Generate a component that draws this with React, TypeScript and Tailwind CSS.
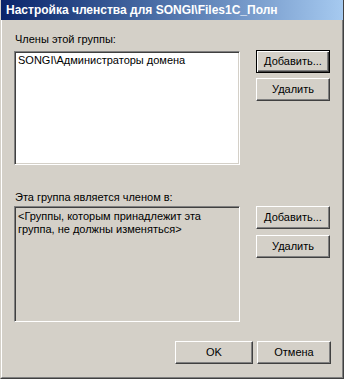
import React from 'react';

const font = { fontFamily: '"Liberation Sans", Arial, sans-serif' };

const Btn: React.FC<{ label: string; primary?: boolean; w?: string }> = ({ label, primary, w = 'w-[74px]' }) => (
  <button
    className={
      primary
        ? `${w} h-[23px] bg-[#d4d0c8] border border-black shadow-[inset_1px_1px_0_#ffffff,inset_-1px_-1px_0_#404040,inset_-2px_-2px_0_#808080] text-[11px] text-black leading-none`
        : `${w} h-[23px] bg-[#d4d0c8] border-t border-l border-t-white border-l-white border-b border-r border-b-[#404040] border-r-[#404040] shadow-[inset_-1px_-1px_0_#808080] text-[11px] text-black leading-none`
    }
  >
    {label}
  </button>
);

const App: React.FC = () => {
  return (
    <div
      className="w-[344px] h-[379px] bg-[#d4d0c8] border-l border-l-[#d4d0c8] border-r border-r-[#404040] border-b border-b-[#404040] flex flex-col text-black overflow-hidden"
      style={font}
    >
      <div className="flex-1 flex flex-col border-l border-l-white border-r border-r-[#808080] border-b border-b-[#808080]">
        {/* title bar */}
        <div className="h-[20px] -ml-[2px] -mr-[1px] bg-gradient-to-r from-[#0a246a] to-[#a6caf0] flex items-center pl-[6px]">
          <span className="text-white font-bold text-[12px] whitespace-nowrap">
            Настройка членства для SONGI\Files1C_Полн
          </span>
        </div>

        <div className="pl-[12px] flex flex-col">
          <div className="mt-[13px] pl-[1px] text-[11px] leading-[13px]">Члены этой группы:</div>
          <div className="mt-[5px] flex gap-[16px]">
            <div className="w-[226px] h-[114px] bg-white border-t border-l border-t-[#808080] border-l-[#808080] border-b border-r border-b-white border-r-white shadow-[inset_1px_1px_0_#404040,inset_-1px_-1px_0_#d4d0c8] px-[3px] pt-[2px]">
              <div className="text-[11px] leading-[13px] whitespace-nowrap">SONGI\Администраторы домена</div>
            </div>
            <div className="-mt-[1px] flex flex-col gap-[5px]">
              <Btn label="Добавить..." primary />
              <Btn label="Удалить" />
            </div>
          </div>

          <div className="mt-[26px] pl-[1px] text-[11px] leading-[13px]">Эта группа является членом в:</div>
          <div className="mt-[2px] flex gap-[16px]">
            <div className="w-[226px] h-[116px] bg-[#d4d0c8] border-t border-l border-t-[#808080] border-l-[#808080] border-b border-r border-b-white border-r-white shadow-[inset_1px_1px_0_#404040,inset_-1px_-1px_0_#d4d0c8] px-[3px] pt-[3px]">
              <div className="text-[11px] leading-[13px] whitespace-nowrap">
                &lt;Группы, которым принадлежит эта
                <br />
                группа, не должны изменяться&gt;
              </div>
            </div>
            <div className="flex flex-col gap-[6px]">
              <Btn label="Добавить..." />
              <Btn label="Удалить" />
            </div>
          </div>

          <div className="mt-[19px] flex justify-end gap-[4px] pr-[11px]">
            <Btn label="OK" w="w-[78px]" />
            <Btn label="Отмена" />
          </div>
        </div>
      </div>
    </div>
  );
};

export default App;
